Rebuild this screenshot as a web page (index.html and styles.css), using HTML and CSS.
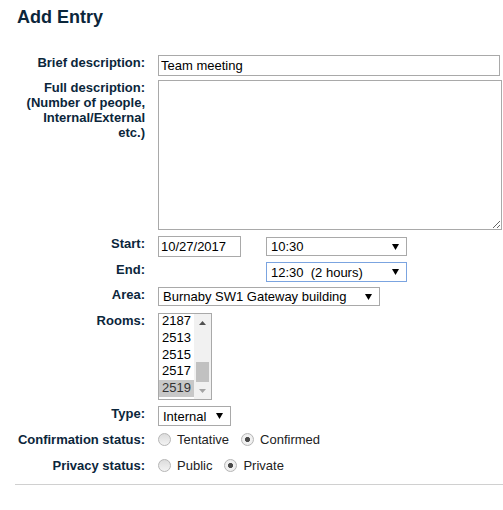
FILE: index.html
```html
<!DOCTYPE html>
<html lang="en">
<head>
<meta charset="utf-8">
<title>Add Entry</title>
<link rel="stylesheet" href="styles.css">
</head>
<body>
<h2 class="title">Add Entry</h2>
<form class="form">
  <div class="row row-brief">
    <label class="label" for="brief">Brief description:</label>
    <input class="text brief" id="brief" type="text" value="Team meeting">
  </div>
  <div class="row row-full">
    <label class="label" for="full">Full description:<br>(Number of people,<br>Internal/External<br>etc.)</label>
    <textarea class="textarea" id="full"></textarea>
  </div>
  <div class="row row-start">
    <span class="label">Start:</span>
    <div class="when">
      <input class="text date" type="text" value="10/27/2017">
      <div class="select time start-time"><span>10:30</span><svg class="arrow" width="7" height="6" viewBox="0 0 7 6"><path d="M0 0H7L3.5 6Z"/></svg></div>
    </div>
  </div>
  <div class="row row-end">
    <span class="label">End:</span>
    <div class="when">
      <span class="date-slot"></span>
      <div class="select time focused"><span>12:30&nbsp;&nbsp;(2 hours)</span><svg class="arrow" width="7" height="6" viewBox="0 0 7 6"><path d="M0 0H7L3.5 6Z"/></svg></div>
    </div>
  </div>
  <div class="row row-area">
    <span class="label">Area:</span>
    <div class="select area"><span>Burnaby SW1 Gateway building</span><svg class="arrow" width="7" height="6" viewBox="0 0 7 6"><path d="M0 0H7L3.5 6Z"/></svg></div>
  </div>
  <div class="row row-rooms">
    <span class="label">Rooms:</span>
    <div class="listbox">
      <div class="items">
        <div class="item">2187</div>
        <div class="item">2513</div>
        <div class="item">2515</div>
        <div class="item">2517</div>
        <div class="item selected">2519</div>
      </div>
      <div class="scrollbar">
        <div class="sb-btn"><svg width="7" height="4" viewBox="0 0 7 4"><path d="M0 4L3.5 0L7 4Z" fill="#505050"/></svg></div>
        <div class="sb-track"><div class="sb-thumb"></div></div>
        <div class="sb-btn"><svg width="7" height="4" viewBox="0 0 7 4"><path d="M0 0H7L3.5 4Z" fill="#a3a3a3"/></svg></div>
      </div>
    </div>
  </div>
  <div class="row row-type">
    <span class="label">Type:</span>
    <div class="select type"><span>Internal</span><svg class="arrow" width="7" height="6" viewBox="0 0 7 6"><path d="M0 0H7L3.5 6Z"/></svg></div>
  </div>
  <div class="row row-conf">
    <span class="label">Confirmation status:</span>
    <div class="options">
      <span class="option"><span class="radio"></span>Tentative</span>
      <span class="option"><span class="radio on"></span>Confirmed</span>
    </div>
  </div>
  <div class="row row-priv">
    <span class="label">Privacy status:</span>
    <div class="options">
      <span class="option"><span class="radio"></span>Public</span>
      <span class="option"><span class="radio on"></span>Private</span>
    </div>
  </div>
</form>
<div class="rule"></div>
</body>
</html>
```
FILE: styles.css
```css
html, body {
  margin: 0;
  padding: 0;
  background: #fff;
}
body {
  font-family: "Liberation Sans", Arial, sans-serif;
  color: #0b263b;
  font-size: 13px;
  width: 503px;
  overflow: hidden;
}
.title {
  margin: 7px 0 0 17px;
  font-size: 18px;
  line-height: 21px;
  font-weight: bold;
}
.form {
  margin: 27px 0 0 0;
}
.row {
  display: flex;
  align-items: flex-start;
}
.label {
  flex: none;
  width: 128px;
  margin-left: 17px;
  margin-right: 13px;
  text-align: right;
  font-weight: bold;
  font-size: 13px;
  line-height: 15px;
  white-space: nowrap;
}
.row-brief { margin-bottom: 4px; }
.row-full { margin-bottom: 6px; }
.row-start { height: 21px; margin-bottom: 5px; }
.row-end { height: 20px; margin-bottom: 5px; }
.row-area { height: 19px; margin-bottom: 7px; }
.row-rooms { height: 87px; margin-bottom: 6px; }
.row-type { height: 20px; margin-bottom: 6px; }
.row-conf { height: 15px; margin-bottom: 11px; }
.row-priv { height: 15px; margin-bottom: 11px; }

.text {
  box-sizing: border-box;
  height: 21px;
  margin: 0;
  border: 1px solid #a9a9a9;
  padding: 1px 2px;
  font-family: "Liberation Sans", Arial, sans-serif;
  font-size: 13px;
  color: #000;
  background: #fff;
  outline: none;
}
.brief { width: 342px; }
.date { width: 83px; flex: none; }
.textarea {
  box-sizing: border-box;
  width: 344px;
  height: 150px;
  margin: 0;
  border: 1px solid #a9a9a9;
  padding: 2px;
  font-family: "Liberation Sans", Arial, sans-serif;
  font-size: 13px;
  resize: both;
  outline: none;
}
.when {
  display: flex;
  align-items: flex-start;
  gap: 25px;
}
.date-slot {
  width: 83px;
  flex: none;
}
.select {
  box-sizing: border-box;
  display: flex;
  align-items: center;
  justify-content: space-between;
  border: 1px solid #a9a9a9;
  background: #fff;
  color: #000;
  padding: 0 7px 0 4px;
  font-size: 13px;
  white-space: nowrap;
}
.arrow { flex: none; fill: #000; }
.time { width: 141px; height: 19px; }
.start-time { margin-top: 1px; }
.focused { height: 20px; border-color: #7ba4e0; }
.area { width: 222px; height: 19px; }
.type { width: 73px; height: 20px; }

.listbox {
  box-sizing: border-box;
  display: flex;
  width: 54px;
  height: 87px;
  border: 1px solid #a9a9a9;
  background: #fff;
  overflow: hidden;
}
.items {
  width: 35px;
  flex: none;
  margin-top: -1px;
}
.item {
  height: 16.75px;
  line-height: 16.75px;
  padding-left: 3px;
  color: #000;
}
.item.selected {
  background: #c8c8c8;
  color: #333;
}
.scrollbar {
  width: 17px;
  flex: none;
  display: flex;
  flex-direction: column;
  background: #f1f1f1;
}
.sb-btn {
  height: 17px;
  flex: none;
  display: flex;
  align-items: center;
  justify-content: center;
}
.sb-track {
  flex: 1;
  display: flex;
  flex-direction: column;
  justify-content: flex-end;
}
.sb-thumb {
  height: 20px;
  margin: 0 2px;
  background: #c1c1c1;
}

.options {
  display: flex;
  align-items: center;
  gap: 12px;
  height: 15px;
  color: #222;
}
.option {
  display: flex;
  align-items: center;
  gap: 6px;
  line-height: 15px;
}
.radio {
  box-sizing: border-box;
  width: 13px;
  height: 13px;
  border-radius: 50%;
  border: 1px solid #b6b6b6;
  background: linear-gradient(#dcdcdc, #f3f3f3);
  flex: none;
}
.radio.on {
  background: radial-gradient(circle, #4a4a4a 0, #4a4a4a 2.2px, #f2f2f2 2.9px, #e8e8e8 100%);
}
.rule {
  margin-left: 15px;
  border-top: 1px solid #d0d0d0;
}
```
